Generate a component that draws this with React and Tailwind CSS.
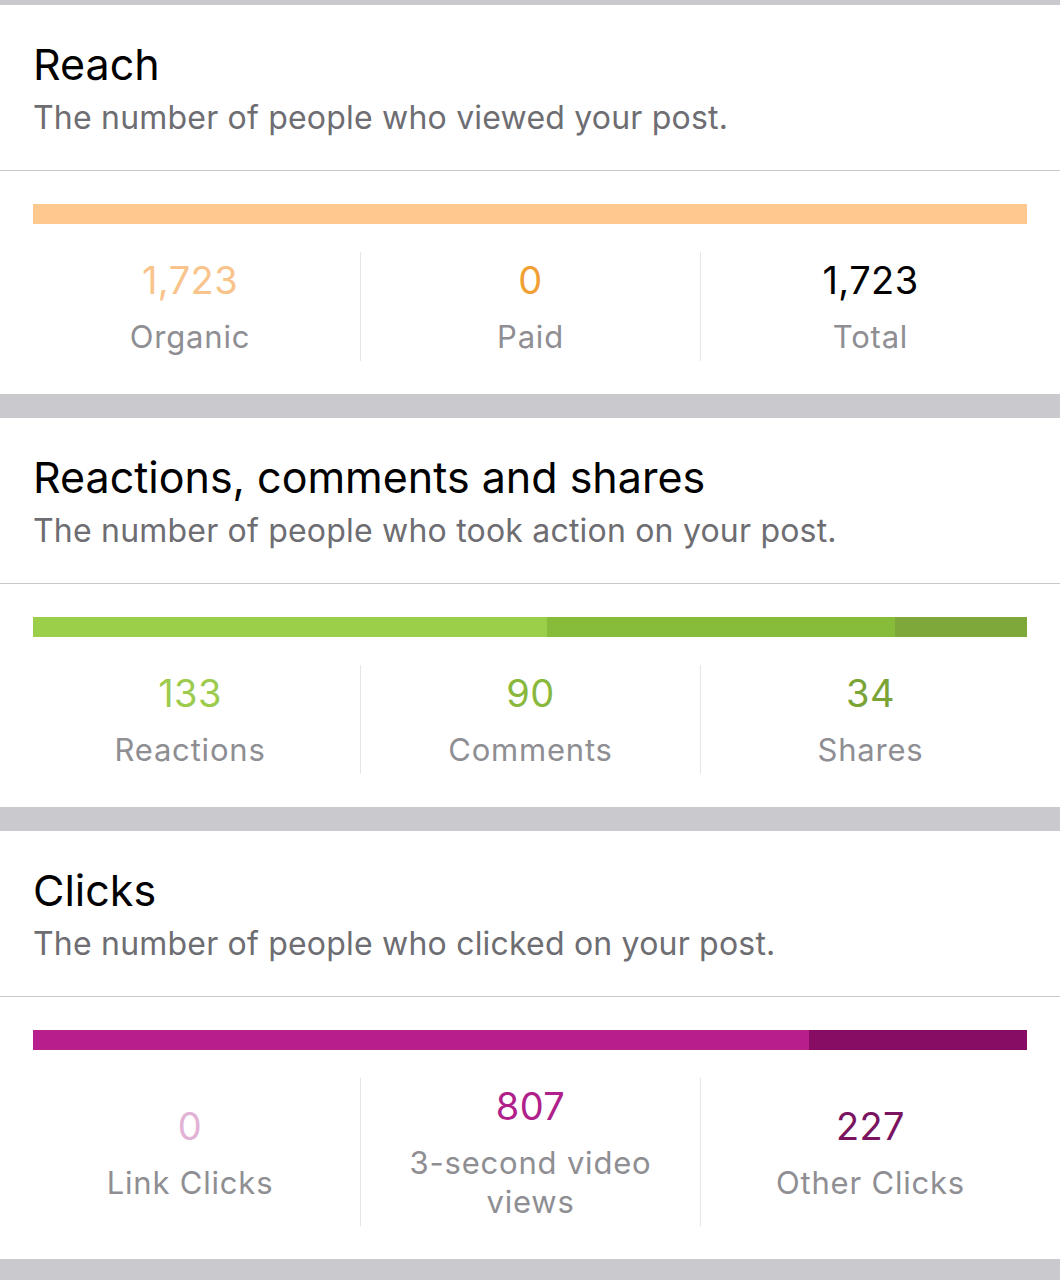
const sections = [
  {
    title: "Reach",
    subtitle: "The number of people who viewed your post.",
    bar: [{ value: 1, color: "bg-[#fec88f]" }],
    stats: [
      { value: "1,723", label: ["Organic"], color: "text-[#f8c48c]" },
      { value: "0", label: ["Paid"], color: "text-[#f0a035]" },
      { value: "1,723", label: ["Total"], color: "text-black" },
    ],
  },
  {
    title: "Reactions, comments and shares",
    subtitle: "The number of people who took action on your post.",
    bar: [
      { value: 133, color: "bg-[#9bcf4a]" },
      { value: 90, color: "bg-[#87bb3a]" },
      { value: 34, color: "bg-[#7fa83a]" },
    ],
    stats: [
      { value: "133", label: ["Reactions"], color: "text-[#9ccb4e]" },
      { value: "90", label: ["Comments"], color: "text-[#88b83c]" },
      { value: "34", label: ["Shares"], color: "text-[#7ba437]" },
    ],
  },
  {
    title: "Clicks",
    subtitle: "The number of people who clicked on your post.",
    bar: [
      { value: 0, color: "bg-[#e4b4d8]" },
      { value: 807, color: "bg-[#b81e8c]" },
      { value: 227, color: "bg-[#870d64]" },
    ],
    stats: [
      { value: "0", label: ["Link Clicks"], color: "text-[#e2b3d6]" },
      { value: "807", label: ["3-second video", "views"], color: "text-[#b0208a]" },
      { value: "227", label: ["Other Clicks"], color: "text-[#7b1460]" },
    ],
  },
];

function Bar({ parts }) {
  const total = parts.reduce((s, p) => s + p.value, 0);
  return (
    <div className="flex h-[20px] w-full">
      {parts.map((p, i) =>
        p.value > 0 ? (
          <div key={i} className={`${p.color} h-full`} style={{ width: `${(p.value / total) * 100}%` }} />
        ) : null
      )}
    </div>
  );
}

function Section({ s }) {
  return (
    <section className="bg-white">
      <header className="border-b border-[#c8c7cc] px-[33px] pt-[33px] pb-[32px]">
        <h2 className="text-[43px] leading-[52px] text-black">{s.title}</h2>
        <p className="mt-[8px] text-[32px] leading-[40px] tracking-[0.2px] text-[#6d6d72]">{s.subtitle}</p>
      </header>
      <div className="px-[33px] pt-[33px]">
        <Bar parts={s.bar} />
      </div>
      <div className="grid grid-cols-3 px-[20px] pt-[28px] pb-[33px]">
        {s.stats.map((st, i) => (
          <div
            key={i}
            className={`flex flex-col items-center justify-center pt-[6px] pb-[5px] text-center ${
              i > 0 ? "border-l border-[#e5e5ea]" : ""
            }`}
          >
            <div className={`text-[38px] leading-[44px] tracking-[0.4px] ${st.color}`}>{st.value}</div>
            <div className="mt-[15px] text-[31px] leading-[39px] tracking-[0.8px] text-[#8e8e93]">
              {st.label.map((l, j) => (
                <div key={j}>{l}</div>
              ))}
            </div>
          </div>
        ))}
      </div>
    </section>
  );
}

export default function App() {
  return (
    <main
      className="min-h-[1280px] w-[1060px] bg-[#c9c9ce] pt-[5px]"
      style={{ fontFamily: "Inter, 'Noto Sans', sans-serif" }}
    >
      <div className="flex flex-col gap-[24px] pb-[22px]">
        {sections.map((s, i) => (
          <Section key={i} s={s} />
        ))}
      </div>
    </main>
  );
}
